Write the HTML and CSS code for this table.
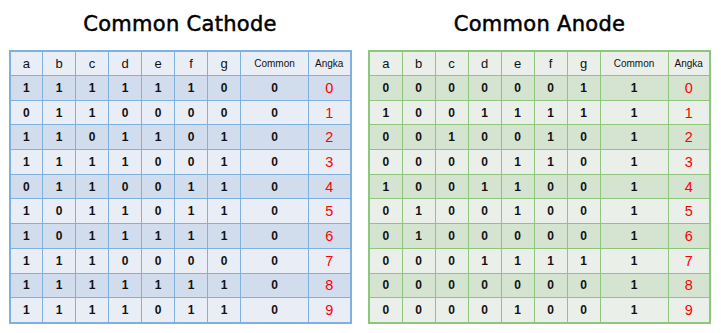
FILE: index.html
```html
<!DOCTYPE html>
<html>
<head>
<meta charset="utf-8">
<link rel="stylesheet" href="styles.css">
</head>
<body>
<div class="page">
  <section class="panel panel-cathode">
    <h2 class="title">Common Cathode</h2>
    <table class="truth cathode">
      <colgroup><col class="c-seg"><col class="c-seg"><col class="c-seg"><col class="c-seg"><col class="c-seg"><col class="c-seg"><col class="c-seg"><col class="c-common"><col class="c-angka"></colgroup>
      <thead><tr><th>a</th><th>b</th><th>c</th><th>d</th><th>e</th><th>f</th><th>g</th><th class="small">Common</th><th class="small">Angka</th></tr></thead>
      <tbody>
        <tr><td>1</td><td>1</td><td>1</td><td>1</td><td>1</td><td>1</td><td>0</td><td>0</td><td class="num">0</td></tr>
        <tr><td>0</td><td>1</td><td>1</td><td>0</td><td>0</td><td>0</td><td>0</td><td>0</td><td class="num">1</td></tr>
        <tr><td>1</td><td>1</td><td>0</td><td>1</td><td>1</td><td>0</td><td>1</td><td>0</td><td class="num">2</td></tr>
        <tr><td>1</td><td>1</td><td>1</td><td>1</td><td>0</td><td>0</td><td>1</td><td>0</td><td class="num">3</td></tr>
        <tr><td>0</td><td>1</td><td>1</td><td>0</td><td>0</td><td>1</td><td>1</td><td>0</td><td class="num">4</td></tr>
        <tr><td>1</td><td>0</td><td>1</td><td>1</td><td>0</td><td>1</td><td>1</td><td>0</td><td class="num">5</td></tr>
        <tr><td>1</td><td>0</td><td>1</td><td>1</td><td>1</td><td>1</td><td>1</td><td>0</td><td class="num">6</td></tr>
        <tr><td>1</td><td>1</td><td>1</td><td>0</td><td>0</td><td>0</td><td>0</td><td>0</td><td class="num">7</td></tr>
        <tr><td>1</td><td>1</td><td>1</td><td>1</td><td>1</td><td>1</td><td>1</td><td>0</td><td class="num">8</td></tr>
        <tr><td>1</td><td>1</td><td>1</td><td>1</td><td>0</td><td>1</td><td>1</td><td>0</td><td class="num">9</td></tr>
      </tbody>
    </table>
  </section>
  <section class="panel panel-anode">
    <h2 class="title">Common Anode</h2>
    <table class="truth anode">
      <colgroup><col class="c-seg"><col class="c-seg"><col class="c-seg"><col class="c-seg"><col class="c-seg"><col class="c-seg"><col class="c-seg"><col class="c-common"><col class="c-angka"></colgroup>
      <thead><tr><th>a</th><th>b</th><th>c</th><th>d</th><th>e</th><th>f</th><th>g</th><th class="small">Common</th><th class="small">Angka</th></tr></thead>
      <tbody>
        <tr><td>0</td><td>0</td><td>0</td><td>0</td><td>0</td><td>0</td><td>1</td><td>1</td><td class="num">0</td></tr>
        <tr><td>1</td><td>0</td><td>0</td><td>1</td><td>1</td><td>1</td><td>1</td><td>1</td><td class="num">1</td></tr>
        <tr><td>0</td><td>0</td><td>1</td><td>0</td><td>0</td><td>1</td><td>0</td><td>1</td><td class="num">2</td></tr>
        <tr><td>0</td><td>0</td><td>0</td><td>0</td><td>1</td><td>1</td><td>0</td><td>1</td><td class="num">3</td></tr>
        <tr><td>1</td><td>0</td><td>0</td><td>1</td><td>1</td><td>0</td><td>0</td><td>1</td><td class="num">4</td></tr>
        <tr><td>0</td><td>1</td><td>0</td><td>0</td><td>1</td><td>0</td><td>0</td><td>1</td><td class="num">5</td></tr>
        <tr><td>0</td><td>1</td><td>0</td><td>0</td><td>0</td><td>0</td><td>0</td><td>1</td><td class="num">6</td></tr>
        <tr><td>0</td><td>0</td><td>0</td><td>1</td><td>1</td><td>1</td><td>1</td><td>1</td><td class="num">7</td></tr>
        <tr><td>0</td><td>0</td><td>0</td><td>0</td><td>0</td><td>0</td><td>0</td><td>1</td><td class="num">8</td></tr>
        <tr><td>0</td><td>0</td><td>0</td><td>0</td><td>1</td><td>0</td><td>0</td><td>1</td><td class="num">9</td></tr>
      </tbody>
    </table>
  </section>
</div>
</body>
</html>
```

FILE: styles.css
```css
html, body {
  margin: 0;
  padding: 0;
  background: #ffffff;
}
.page {
  display: flex;
  width: 721px;
  height: 333px;
  padding: 0 0 0 10px;
  box-sizing: border-box;
  gap: 19px;
}
.panel {
  display: flex;
  flex-direction: column;
  align-items: center;
}
.panel-cathode { width: 340px; }
.panel-anode { width: 341px; }
.title {
  margin: 0;
  height: 50px;
  box-sizing: border-box;
  padding-top: 11px;
  font-family: "DejaVu Sans", sans-serif;
  font-weight: normal;
  font-size: 21px;
  line-height: 26px;
  color: #000;
  letter-spacing: 0.3px;
  -webkit-text-stroke: 0.5px #000;
}
.truth {
  width: 100%;
  border-collapse: collapse;
  table-layout: fixed;
  font-family: "Liberation Sans", Arial, sans-serif;
  color: #111;
}
.c-seg { width: 33px; }
.c-common { width: 68px; }
.c-angka { width: 42px; }
.truth th, .truth td {
  text-align: center;
  padding: 0;
  border: 1px solid;
}
.truth th {
  height: 23px;
  font-weight: normal;
  font-size: 13px;
}
.truth th.small {
  font-size: 10px;
}
.truth td {
  height: 23.7px;
  font-weight: bold;
  font-size: 12px;
}
.truth td.num {
  font-weight: normal;
  font-size: 14.5px;
  color: #ff0000;
}
.cathode { border: 2px solid #7fb1df; }
.cathode th, .cathode td { border-color: #7fb1df; }
.cathode thead tr { background: #e9eef6; }
.cathode tbody tr:nth-child(odd) { background: #d1dded; }
.cathode tbody tr:nth-child(even) { background: #e9eef6; }
.anode { border: 2px solid #8ec67e; }
.anode th, .anode td { border-color: #8ec67e; }
.anode thead tr { background: #ebefe9; }
.anode tbody tr:nth-child(odd) { background: #d5e3d1; }
.anode tbody tr:nth-child(even) { background: #ebefe9; }
```
